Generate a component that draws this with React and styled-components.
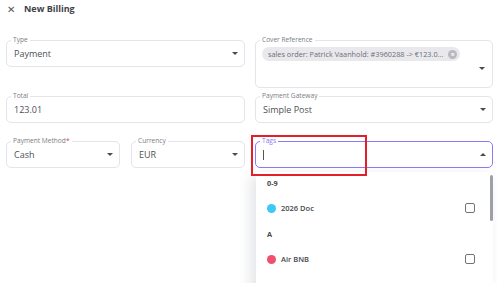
import React from "react";
import styled, { createGlobalStyle } from "styled-components";

const Global = createGlobalStyle`
  html, body { margin: 0; padding: 0; background: #fff; }
  body { font-family: "Open Sans", "Liberation Sans", sans-serif; color: #3c3f44; overflow: hidden; }
  * { box-sizing: border-box; }
`;

const Page = styled.div`
  position: relative;
  width: 497px;
  height: 283px;
  overflow: hidden;
  padding: 0 4px 0 6px;
`;

const Header = styled.div`
  display: flex;
  align-items: center;
  gap: 9px;
  height: 17px;
  padding-left: 1px;
  margin-bottom: 23px;
`;

const Close = styled.span`
  font-size: 10px;
  color: #555;
  line-height: 1;
`;

const Title = styled.h1`
  margin: 0;
  font-size: 9px;
  font-weight: 700;
  color: #3f4247;
`;

const Row = styled.div`
  display: grid;
  grid-template-columns: 239px 238px;
  column-gap: 10px;
  align-items: start;
  margin-bottom: ${(p) => p.$mb || 0}px;
`;

const Split = styled.div`
  display: grid;
  grid-template-columns: 114px 114px;
  column-gap: 11px;
`;

const Field = styled.div`
  position: relative;
  height: ${(p) => p.$h || 27}px;
  border: 1px solid ${(p) => (p.$active ? "#8a7cf5" : "#e4e5ea")};
  border-radius: 5px;
  display: flex;
  align-items: ${(p) => (p.$top ? "flex-start" : "center")};
  justify-content: space-between;
  padding: ${(p) => (p.$top ? "6px 7px 0 6px" : "0 6px 0 7px")};
`;

const Label = styled.span`
  position: absolute;
  top: -5px;
  left: 4px;
  padding: 0 2px;
  background: #fff;
  font-size: 6.6px;
  line-height: 8px;
  color: ${(p) => (p.$active ? "#8a7cf5" : "#7a7d83")};
`;

const Req = styled.span`
  color: #e53950;
`;

const Value = styled.span`
  font-size: 9px;
  color: #4e5156;
`;

const Caret = styled.span`
  width: 0;
  height: 0;
  border-left: 3px solid transparent;
  border-right: 3px solid transparent;
  ${(p) => (p.$up ? "border-bottom: 3px solid #4a4a4a;" : "border-top: 3px solid #4a4a4a;")}
  align-self: center;
  margin-top: ${(p) => p.$mt || 0}px;
`;

const Chip = styled.span`
  display: inline-flex;
  align-items: center;
  gap: 5px;
  height: 14px;
  padding: 0 3px 0 6px;
  border-radius: 7px;
  background: #e9e9ed;
  font-size: 7.3px;
  color: #6b6e73;
  white-space: nowrap;
`;

const ChipX = styled.span`
  width: 9px;
  height: 9px;
  border-radius: 50%;
  background: #b9babf;
  color: #fff;
  font-size: 7px;
  line-height: 9px;
  text-align: center;
  font-weight: 700;
`;

const Cursor = styled.span`
  width: 1px;
  height: 10px;
  background: #555;
`;

const Menu = styled.div`
  position: absolute;
  left: 256px;
  top: 172px;
  width: 237px;
  height: 130px;
  background: #fff;
  border-radius: 4px;
  box-shadow: -5px 4px 14px rgba(60, 64, 80, 0.14);
  padding: 5px 0 0 11px;
`;

const Group = styled.div`
  font-size: 7.3px;
  font-weight: 700;
  color: #45484d;
  height: 12px;
  line-height: 12px;
  margin-bottom: ${(p) => p.$mb}px;
`;

const Item = styled.div`
  display: flex;
  align-items: center;
  height: 14px;
  padding-right: 18px;
  margin-bottom: 13px;
`;

const Dot = styled.span`
  width: 9px;
  height: 9px;
  border-radius: 50%;
  background: ${(p) => p.$c};
  margin-right: 5px;
`;

const ItemText = styled.span`
  flex: 1;
  font-size: 7.5px;
  font-weight: 600;
  color: #45484d;
`;

const Check = styled.span`
  width: 10px;
  height: 10px;
  border: 1.2px solid #6f7378;
  border-radius: 2px;
`;

const Scroll = styled.div`
  position: absolute;
  right: 0;
  top: 3px;
  width: 3px;
  height: 46px;
  border-radius: 2px;
  background: #9da1a7;
`;

const Highlight = styled.div`
  position: absolute;
  left: 251px;
  top: 135px;
  width: 116px;
  height: 41px;
  border: 2px solid #e3202a;
  pointer-events: none;
`;

export default function App() {
  return (
    <>
      <Global />
      <Page>
        <Header>
          <Close>✕</Close>
          <Title>New Billing</Title>
        </Header>

        <Row $mb={8}>
          <Field>
            <Label>Type</Label>
            <Value>Payment</Value>
            <Caret />
          </Field>
          <Field $h={48} $top>
            <Label>Cover Reference</Label>
            <Chip>
              sales order: Patrick Vaanhold: #3960288 -&gt; €123.0...
              <ChipX>×</ChipX>
            </Chip>
            <Caret $mt={2} />
          </Field>
        </Row>

        <Row $mb={18}>
          <Field>
            <Label>Total</Label>
            <Value>123.01</Value>
          </Field>
          <Field>
            <Label>Payment Gateway</Label>
            <Value>Simple Post</Value>
            <Caret />
          </Field>
        </Row>

        <Row>
          <Split>
            <Field>
              <Label>
                Payment Method<Req>*</Req>
              </Label>
              <Value>Cash</Value>
              <Caret />
            </Field>
            <Field>
              <Label>Currency</Label>
              <Value>EUR</Value>
              <Caret />
            </Field>
          </Split>
          <Field $active>
            <Label $active>Tags</Label>
            <Cursor />
            <Caret $up />
          </Field>
        </Row>

        <Menu>
          <Group $mb={12}>0-9</Group>
          <Item>
            <Dot $c="#3ec8f5" />
            <ItemText>2026 Doc</ItemText>
            <Check />
          </Item>
          <Group $mb={12}>A</Group>
          <Item>
            <Dot $c="#f0506e" />
            <ItemText>Air BNB</ItemText>
            <Check />
          </Item>
          <Scroll />
        </Menu>

        <Highlight />
      </Page>
    </>
  );
}
